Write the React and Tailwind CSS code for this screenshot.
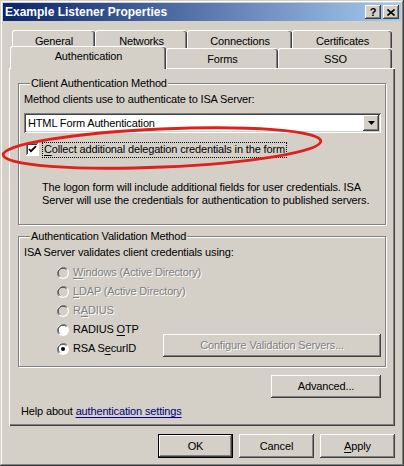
import React from "react";

const raised =
  "bg-[#d4d0c8] shadow-[inset_-1px_-1px_#404040,inset_1px_1px_#ffffff,inset_-2px_-2px_#808080]";
const sunken =
  "shadow-[inset_1px_1px_#808080,inset_-1px_-1px_#ffffff,inset_2px_2px_#404040,inset_-2px_-2px_#d4d0c8]";
const disabledText = "text-[#808080] [text-shadow:1px_1px_0_#ffffff]";

const Btn = ({ children, className = "", disabled, isDefault }) => (
  <div
    className={`flex items-center justify-center ${
      isDefault
        ? "bg-[#d4d0c8] border border-black shadow-[inset_-1px_-1px_#404040,inset_1px_1px_#ffffff,inset_-2px_-2px_#808080]"
        : raised
    } ${disabled ? disabledText : "text-black"} ${className}`}
  >
    {children}
  </div>
);

const Radio = ({ label, checked, disabled }) => (
  <div className={`flex items-center h-[19px] pl-[33px] ${disabled ? disabledText : "text-black"}`}>
    <svg width="12" height="12" viewBox="0 0 12 12" className="mr-[4px] shrink-0">
      <circle cx="6" cy="6" r="6" fill="#ffffff" />
      <path d="M1.8 10.2A6 6 0 0 1 10.2 1.8" stroke="#808080" strokeWidth="1" fill="none" />
      <circle cx="6" cy="6" r="4.8" fill={disabled ? "#d4d0c8" : "#ffffff"} />
      <path d="M2.6 9.4A4.8 4.8 0 0 1 9.4 2.6" stroke="#404040" strokeWidth="1" fill="none" />
      {checked && <circle cx="6" cy="6" r="2" fill="#000000" />}
    </svg>
    <span>{label}</span>
  </div>
);

const Tab = ({ label, className = "" }) => (
  <div
    className={`flex items-center justify-center bg-[#d4d0c8] border-l border-t border-white rounded-tl-[3px] rounded-tr-[3px] shadow-[inset_-1px_0_#404040,inset_-2px_0_#808080] ${className}`}
  >
    {label}
  </div>
);

export default function App() {
  return (
    <div
      className="relative w-[404px] h-[466px] bg-[#d4d0c8] p-[3px] flex flex-col text-[11px] leading-[13px] tracking-[-0.15px] text-black shadow-[inset_-1px_-1px_#404040,inset_1px_1px_#d4d0c8,inset_-2px_-2px_#808080,inset_2px_2px_#ffffff]"
      style={{ fontFamily: '"Liberation Sans", Arial, sans-serif' }}
    >
      {/* Title bar */}
      <div className="h-[18px] flex items-center bg-[linear-gradient(to_right,#0a246a,#a6caf0)] pl-[2px] pr-[2px]">
        <span className="text-white font-bold text-[12px] tracking-normal flex-1">Example Listener Properties</span>
        <div className={`w-[16px] h-[14px] ${raised} flex items-center justify-center font-bold text-[11px] leading-none`}>?</div>
        <div className={`w-[16px] h-[14px] ml-[2px] ${raised} flex items-center justify-center`}>
          <svg width="8" height="7" viewBox="0 0 8 7">
            <path d="M0.5 0.5L7.5 6.5M7.5 0.5L0.5 6.5" stroke="#000" strokeWidth="1.6" />
          </svg>
        </div>
      </div>

      <div className="flex-1 flex flex-col px-[6px] pt-[9px]">
        {/* Tabs */}
        <div className="flex flex-col">
          <div className="flex pl-[3px] h-[18px]">
            <Tab label="General" className="w-[83px] pt-[3px]" />
            <Tab label="Networks" className="w-[92px] pt-[3px]" />
            <Tab label="Connections" className="w-[105px] pt-[3px]" />
            <Tab label="Certificates" className="w-[100px] pt-[3px]" />
          </div>
          <div className="flex items-end h-[22px] mt-[-2px] pl-[1px]">
            <Tab label="Authentication" className="w-[156px] h-[23px] mb-[-1px] relative z-10 pb-[3px]" />
            <Tab label="Forms" className="w-[112px] h-[20px] pt-[2px]" />
            <Tab label="SSO" className="w-[114px] h-[20px] pt-[2px]" />
          </div>
        </div>

        {/* Panel */}
        <div className="h-[358px] flex flex-col border-l border-t border-white shadow-[inset_-1px_-1px_#404040,inset_-2px_-2px_#808080] pl-[8px] pr-[9px] pt-[8px]">
          <fieldset className="border border-[#808080] shadow-[1px_1px_0_#ffffff,inset_1px_1px_0_#ffffff] pl-[5px] pr-[4px] h-[148px]">
            <legend className="ml-[6px] px-[1px] bg-[#d4d0c8]">Client Authentication Method</legend>
            <div className="mt-[3px]">Method clients use to authenticate to ISA Server:</div>
            <div className={`mt-[7px] h-[20px] bg-white ${sunken} flex items-center pl-[4px] pr-[2px]`}>
              <span className="flex-1">HTML Form Authentication</span>
              <div className={`w-[16px] h-[16px] ${raised} flex items-center justify-center`}>
                <svg width="7" height="4" viewBox="0 0 7 4">
                  <path d="M0 0H7L3.5 4Z" fill="#000" />
                </svg>
              </div>
            </div>
            <div className="mt-[8px] flex items-center h-[17px] pl-[2px]">
              <svg width="13" height="13" viewBox="0 0 13 13" className="shrink-0">
                <rect x="0" y="0" width="13" height="13" fill="#ffffff" />
                <path d="M0.5 12V0.5H12" stroke="#808080" fill="none" />
                <path d="M1.5 11V1.5H11" stroke="#404040" fill="none" />
                <path d="M12.5 0V12.5H0" stroke="#ffffff" fill="none" />
                <path d="M3 6L5 8.2L10 3.2" stroke="#000" strokeWidth="1.8" fill="none" />
              </svg>
              <span className="ml-[3px] px-[1px] border border-dotted border-black h-[16px] flex items-center">
                <span className="underline underline-offset-2">C</span>ollect additional delegation credentials in the form
              </span>
            </div>
            <p className="mt-[23px] pl-[18px] leading-[13px]">
              The logon form will include additional fields for user credentials. ISA Server will use the credentials for authentication to published servers.
            </p>
          </fieldset>

          <fieldset className="mt-[5px] border border-[#808080] shadow-[1px_1px_0_#ffffff,inset_1px_1px_0_#ffffff] pl-[5px] pr-[4px] h-[137px]">
            <legend className="ml-[6px] px-[1px] bg-[#d4d0c8]">Authentication Validation Method</legend>
            <div className="mt-[3px]">ISA Server validates client credentials using:</div>
            <div className="mt-[4px] flex flex-col">
              <Radio disabled label={<><span className="underline underline-offset-2">W</span>indows (Active Directory)</>} />
              <Radio disabled label={<><span className="underline underline-offset-2">L</span>DAP (Active Directory)</>} />
              <Radio disabled label={<>R<span className="underline underline-offset-2">A</span>DIUS</>} />
              <Radio label={<>RADIUS <span className="underline underline-offset-2">O</span>TP</>} />
              <div className="flex items-center">
                <Radio checked label={<>RSA S<span className="underline underline-offset-2">e</span>curID</>} />
                <Btn disabled className="ml-auto mt-[-7px] w-[218px] h-[23px]">
                  Configure Validation Servers...
                </Btn>
              </div>
            </div>
          </fieldset>

          <div className="flex justify-end mt-[8px]">
            <Btn className="w-[110px] h-[23px] mr-[5px]">Advanced...</Btn>
          </div>
          <div className="mt-[7px] pl-[3px]">
            Help about{" "}
            <span className="text-[#000080] underline underline-offset-2">authentication settings</span>
          </div>
        </div>

        {/* Bottom buttons */}
        <div className="flex justify-end gap-[6px] mt-[8px]">
          <Btn isDefault className="w-[75px] h-[24px]">OK</Btn>
          <Btn className="w-[75px] h-[24px]">Cancel</Btn>
          <Btn className="w-[75px] h-[24px]">
            <span><span className="underline underline-offset-2">A</span>pply</span>
          </Btn>
        </div>
      </div>

      {/* Red highlight ellipse */}
      <svg className="absolute left-0 top-0 pointer-events-none" width="404" height="466">
        <ellipse
          cx="162"
          cy="148"
          rx="159"
          ry="19"
          transform="rotate(-2.5 162 148)"
          fill="none"
          stroke="#e0201c"
          strokeWidth="2.8"
        />
      </svg>
    </div>
  );
}
